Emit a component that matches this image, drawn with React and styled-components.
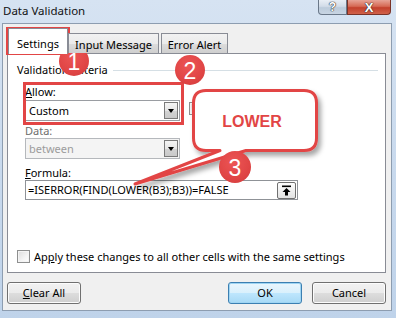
import React from "react";
import styled, { createGlobalStyle } from "styled-components";

const GlobalStyle = createGlobalStyle`
  html, body { margin: 0; padding: 0; }
  body {
    width: 396px;
    height: 318px;
    overflow: hidden;
    font-family: "Segoe UI", "Noto Sans", sans-serif;
    font-size: 11px;
    color: #000;
  }
`;

const RED = "#e24545";

const Window = styled.div`
  position: relative;
  box-sizing: border-box;
  width: 396px;
  height: 318px;
  padding: 0 4px 7px 2px;
  display: flex;
  flex-direction: column;
  background: linear-gradient(180deg, #d6e3f2 0%, #c8d9ed 55%, #bfd3ea 100%);
`;

const TitleBar = styled.div`
  height: 23px;
  display: flex;
  align-items: flex-start;
  justify-content: space-between;
`;

const Title = styled.div`
  padding: 3px 0 0 1px;
  line-height: 16px;
  font-size: 11.5px;
  color: #111;
`;

const Caption = styled.div`
  display: flex;
  margin-right: 1px;
`;

const CaptionButton = styled.div`
  box-sizing: border-box;
  width: ${(p) => p.$w}px;
  height: 15px;
  border: 1px solid ${(p) => (p.$close ? "#7a3328" : "#6a7889")};
  border-top: none;
  border-radius: ${(p) => (p.$close ? "0 0 4px 0" : "0 0 0 4px")};
  background: ${(p) =>
    p.$close
      ? "linear-gradient(180deg, #e7a497 0%, #d66a55 45%, #c3402c 55%, #d0624a 100%)"
      : "linear-gradient(180deg, #e8eef5 0%, #d2dce8 45%, #bccbdb 55%, #c8d5e3 100%)"};
  display: flex;
  align-items: center;
  justify-content: center;
  font-family: "Liberation Sans", Arial, sans-serif;
  font-weight: bold;
  font-size: ${(p) => (p.$close ? 13 : 12)}px;
  color: #fff;
  text-shadow: 0 0 1px #333, 0 0 1px #333, 0 0 1px #333;
`;

const Body = styled.div`
  flex: 1;
  box-sizing: border-box;
  background: #f0f0f0;
  border: 1px solid #8d9db0;
  padding: 4px 5px 6px 4px;
  display: flex;
  flex-direction: column;
`;

const TabRow = styled.div`
  height: 25px;
  display: flex;
  align-items: flex-end;
  padding-left: 1px;
`;

const Tab = styled.div`
  box-sizing: border-box;
  width: ${(p) => p.$w}px;
  margin-left: ${(p) => p.$ml || 0}px;
  height: ${(p) => (p.$active ? 26 : 20)}px;
  margin-bottom: ${(p) => (p.$active ? -1 : 0)}px;
  padding-top: ${(p) => (p.$active ? 6 : 2)}px;
  line-height: 18px;
  text-align: center;
  border: 1px solid #898c95;
  border-bottom: none;
  background: ${(p) =>
    p.$active ? "#fff" : "linear-gradient(180deg, #f2f2f2 0%, #ebebeb 50%, #dddddd 51%, #cfcfcf 100%)"};
  position: relative;
  z-index: ${(p) => (p.$active ? 2 : 1)};
`;

const Panel = styled.div`
  box-sizing: border-box;
  height: 220px;
  background: #fff;
  border: 1px solid #898c95;
  padding: 8px 7px 0 9px;
  display: flex;
  flex-direction: column;
`;

const GroupHeader = styled.div`
  display: flex;
  align-items: center;
  line-height: 16px;
  gap: 5px;
  &::after {
    content: "";
    flex: 1;
    height: 1px;
    background: #d5dfe5;
  }
`;

const Fields = styled.div`
  margin-left: 8px;
  display: flex;
  flex-direction: column;
`;

const Label = styled.div`
  line-height: 15px;
  margin-top: ${(p) => p.$mt}px;
  color: ${(p) => (p.$disabled ? "#6d6d6d" : "#000")};
`;

const Row = styled.div`
  display: flex;
  align-items: flex-start;
  gap: 9px;
  margin-top: 1px;
`;

const Combo = styled.div`
  box-sizing: border-box;
  width: 155px;
  height: 21px;
  border: 1px solid ${(p) => (p.$disabled ? "#b5b8bc" : "#9a9da2")};
  background: ${(p) => (p.$disabled ? "#f4f4f4" : "#fff")};
  color: ${(p) => (p.$disabled ? "#9c9c9c" : "#000")};
  display: flex;
  align-items: center;
  padding: 1px 1px 1px 3px;
  line-height: 17px;
`;

const ComboText = styled.span`
  flex: 1;
`;

const DropButton = styled.div`
  box-sizing: border-box;
  width: 14px;
  height: 17px;
  border: 1px solid #7a7a7a;
  background: linear-gradient(180deg, #f4f4f4 0%, #e6e6e6 50%, #d3d3d3 51%, #c9c9c9 100%);
  display: flex;
  align-items: center;
  justify-content: center;
  &::after {
    content: "";
    border-left: 3.5px solid transparent;
    border-right: 3.5px solid transparent;
    border-top: 4px solid #000;
    margin-top: 1px;
  }
`;

const CheckBox = styled.div`
  box-sizing: border-box;
  flex: none;
  width: 13px;
  height: 13px;
  border: 1px solid #8e8f8f;
  background: linear-gradient(135deg, #dcdcdc 0%, #f4f4f4 60%, #ffffff 100%);
  box-shadow: inset 0 0 0 1px #f4f4f4;
`;

const IgnoreBlank = styled.div`
  display: flex;
  align-items: center;
  gap: 4px;
  margin-top: 1px;
`;

const FormulaBox = styled.div`
  box-sizing: border-box;
  width: 273px;
  height: 20px;
  border: 1px solid #8f9297;
  display: flex;
  align-items: center;
  padding: 1px 1px 1px 2px;
  line-height: 16px;
`;

const RefButton = styled.div`
  box-sizing: border-box;
  width: 19px;
  height: 17px;
  border: 1px solid #707070;
  border-radius: 2px;
  background: linear-gradient(180deg, #fdfdfd 0%, #f0f0f0 50%, #e2e2e2 100%);
  display: flex;
  align-items: center;
  justify-content: center;
`;

const ApplyRow = styled.div`
  margin-top: 49px;
  display: flex;
  align-items: center;
  gap: 4px;
  line-height: 15px;
`;

const ButtonRow = styled.div`
  margin-top: 9px;
  display: flex;
  gap: 10px;
`;

const Spacer = styled.div`
  flex: 1;
`;

const Button = styled.div`
  box-sizing: border-box;
  width: 74px;
  height: 22px;
  border: 1px solid ${(p) => (p.$default ? "#3c7fb1" : "#707070")};
  border-radius: 3px;
  background: ${(p) =>
    p.$default
      ? "linear-gradient(180deg, #eaf6fd 0%, #d9f0fc 50%, #bee6fd 51%, #a7d9f5 100%)"
      : "linear-gradient(180deg, #f2f2f2 0%, #ebebeb 50%, #dddddd 51%, #cfcfcf 100%)"};
  box-shadow: inset 0 0 0 1px ${(p) => (p.$default ? "#9fd5f3" : "#fcfcfc")};
  text-align: center;
  line-height: 20px;
`;

const Overlay = styled.div`
  position: absolute;
  inset: 0;
  pointer-events: none;
`;

const RedFrame = styled.div`
  position: absolute;
  box-sizing: border-box;
  left: ${(p) => p.$x}px;
  top: ${(p) => p.$y}px;
  width: ${(p) => p.$w}px;
  height: ${(p) => p.$h}px;
  border: 3px solid ${RED};
`;

const Badge = styled.div`
  position: absolute;
  box-sizing: border-box;
  left: ${(p) => p.$x - p.$d / 2}px;
  top: ${(p) => p.$y - p.$d / 2}px;
  width: ${(p) => p.$d}px;
  height: ${(p) => p.$d}px;
  padding-top: 2px;
  border-radius: 50%;
  background: radial-gradient(circle at 45% 35%, #ec5555 0%, #e04545 60%, #cf3a3a 100%);
  color: #fff;
  font-family: "Liberation Sans", Arial, sans-serif;
  font-size: 23px;
  line-height: ${(p) => p.$d - 2}px;
  text-align: center;
`;

const Callout = styled.svg`
  position: absolute;
  left: 0;
  top: 0;
  overflow: visible;
`;

const Acc = styled.span`
  text-decoration: underline;
`;

function UpArrow() {
  return (
    <svg width="11" height="11" viewBox="0 0 11 11">
      <rect x="1" y="0.5" width="9" height="1.6" fill="#000" />
      <path d="M5.5 3 L9.5 7 H7 V10.5 H4 V7 H1.5 Z" fill="#000" />
    </svg>
  );
}

export default function App() {
  return (
    <>
      <GlobalStyle />
      <Window>
        <TitleBar>
          <Title>Data Validation</Title>
          <Caption>
            <CaptionButton $w={29}>?</CaptionButton>
            <CaptionButton $w={44} $close>
              X
            </CaptionButton>
          </Caption>
        </TitleBar>
        <Body>
          <TabRow>
            <Tab $w={60} $active>
              Settings
            </Tab>
            <Tab $w={91}>Input Message</Tab>
            <Tab $w={67} $ml={2}>
              Error Alert
            </Tab>
          </TabRow>
          <Panel>
            <GroupHeader>Validation criteria</GroupHeader>
            <Fields>
              <Label $mt={6}>
                <Acc>A</Acc>llow:
              </Label>
              <Row>
                <Combo>
                  <ComboText>Custom</ComboText>
                  <DropButton />
                </Combo>
                <IgnoreBlank>
                  <CheckBox />
                  <span>
                    Ignore <Acc>b</Acc>lank
                  </span>
                </IgnoreBlank>
              </Row>
              <Label $mt={2} $disabled>
                Data:
              </Label>
              <Combo $disabled>
                <ComboText>between</ComboText>
                <DropButton />
              </Combo>
              <Label $mt={6}>
                <Acc>F</Acc>ormula:
              </Label>
              <FormulaBox>
                <ComboText>=ISERROR(FIND(LOWER(B3);B3))=FALSE</ComboText>
                <RefButton>
                  <UpArrow />
                </RefButton>
              </FormulaBox>
            </Fields>
            <ApplyRow>
              <CheckBox />
              <span>
                Ap<Acc>p</Acc>ly these changes to all other cells with the same settings
              </span>
            </ApplyRow>
          </Panel>
          <ButtonRow>
            <Button>
              <Acc>C</Acc>lear All
            </Button>
            <Spacer />
            <Button $default>OK</Button>
            <Button>Cancel</Button>
          </ButtonRow>
        </Body>

        <Overlay>
          <RedFrame $x={6} $y={27} $w={64} $h={28} />
          <RedFrame $x={23} $y={82} $w={161} $h={43} />
          <Callout width="396" height="318" viewBox="0 0 396 318">
            <defs>
              <filter id="sh" x="-20%" y="-20%" width="150%" height="160%">
                <feDropShadow dx="3" dy="4" stdDeviation="2.5" floodColor="#000" floodOpacity="0.35" />
              </filter>
            </defs>
            <path
              d="M206 90.5 H304 Q316.5 90.5 316.5 103 V138 Q316.5 150.5 304 150.5 H246 L135 184 L220 150.5 H206 Q193.5 150.5 193.5 138 V103 Q193.5 90.5 206 90.5 Z"
              fill="#fff"
              stroke={RED}
              strokeWidth="3"
              strokeLinejoin="round"
              filter="url(#sh)"
            />
            <text
              x="252"
              y="127"
              textAnchor="middle"
              fill={RED}
              fontFamily="Liberation Sans, Arial, sans-serif"
              fontWeight="bold"
              fontSize="16"
            >
              LOWER
            </text>
          </Callout>
          <Badge $x={74} $y={61} $d={30}>
            1
          </Badge>
          <Badge $x={190} $y={70} $d={30}>
            2
          </Badge>
          <Badge $x={235} $y={167} $d={32}>
            3
          </Badge>
        </Overlay>
      </Window>
    </>
  );
}
